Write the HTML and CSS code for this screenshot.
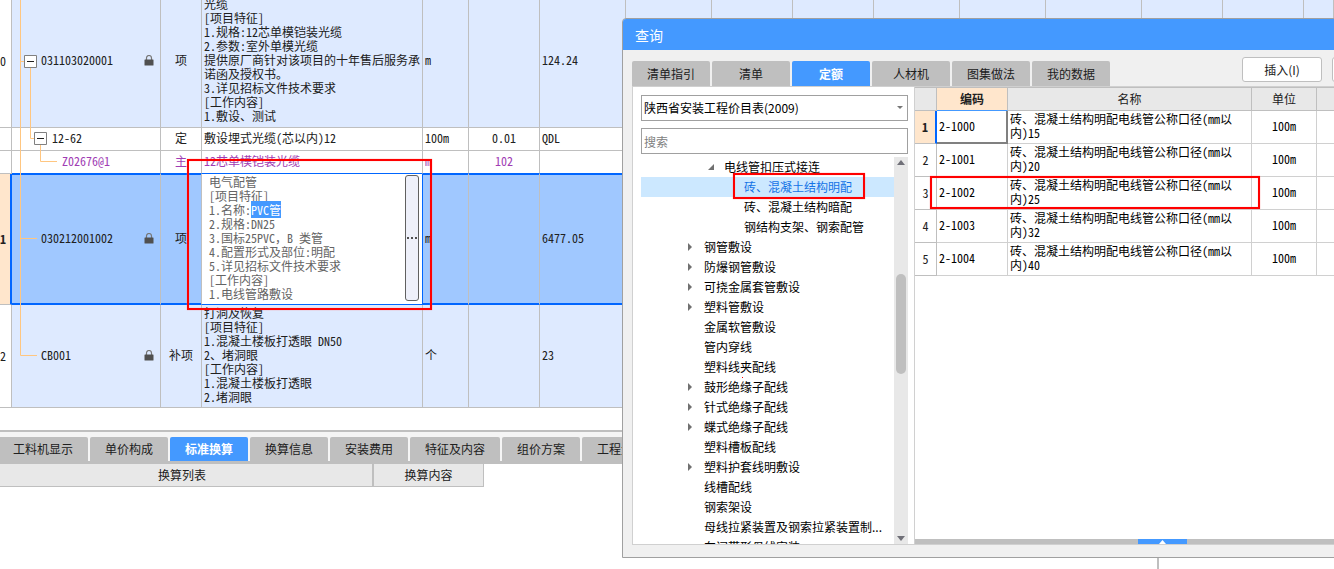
FILE: index.html
```html
<!DOCTYPE html>
<html lang="zh-CN">
<head>
<meta charset="utf-8">
<title>查询</title>
<link rel="stylesheet" href="styles.css">
</head>
<body>
<svg class="defs" width="0" height="0" aria-hidden="true">
  <symbol id="lock" viewBox="0 0 10 11"><path d="M2.5 5V3a2.5 2.5 0 0 1 5 0v2" fill="none" stroke="#777" stroke-width="1.2"/><rect x="0.5" y="4.5" width="9" height="6" rx="0.5" fill="#505050"/></symbol>
</svg>
<main class="workspace">
  <section class="bill">
    <table class="grid">
      <colgroup><col class="w-no"><col class="w-code"><col class="w-kind"><col class="w-desc"><col class="w-unit"><col class="w-qty"><col class="w-l"><col class="w-l"><col class="w-m"><col class="w-m"><col class="w-l"><col class="w-l"><col class="w-xl"><col class="w-m"><col class="w-m"><col></colgroup>
      <tbody>
        <tr class="item r-first"><th>0</th><td><div class="code lv1"><span>031103020001</span><svg class="lock"><use href="#lock"/></svg></div></td><td class="mid">项</td><td>光缆<br>[项目特征]<br>1.规格:12芯单模铠装光缆<br>2.参数:室外单模光缆<br>提供原厂商针对该项目的十年售后服务承诺函及授权书。<br>3.详见招标文件技术要求<br>[工作内容]<br>1.敷设、测试</td><td>m</td><td></td><td>124.24</td><td></td><td></td><td></td><td></td><td></td><td></td><td></td><td></td><td></td></tr>
        <tr class="sub"><th></th><td><div class="code lv2"><span>12-62</span></div></td><td class="mid">定</td><td>敷设埋式光缆(芯以内)12</td><td>100m</td><td class="mid">0.01</td><td>QDL</td><td></td><td></td><td></td><td></td><td></td><td></td><td></td><td></td><td></td></tr>
        <tr class="sub material"><th></th><td><div class="code lv3"><span>Z02676@1</span></div></td><td class="mid">主</td><td>12芯单模铠装光缆</td><td>m</td><td class="mid">102</td><td></td><td></td><td></td><td></td><td></td><td></td><td></td><td></td><td></td><td></td></tr>
        <tr class="current"><th>1</th><td><div class="code lv1"><span>030212001002</span><svg class="lock"><use href="#lock"/></svg></div></td><td class="mid">项</td><td class="editing"><div class="editor"><div class="edit-text" role="textbox" aria-multiline="true" aria-label="项目特征" contenteditable="true">电气配管<br>[项目特征]<br>1.名称:<mark>PVC管</mark><br>2.规格:DN25<br>3.国标25PVC，B 类管<br>4.配置形式及部位:明配<br>5.详见招标文件技术要求<br>[工作内容]<br>1.电线管路敷设</div><button class="more" type="button" aria-label="更多"><i></i><i></i><i></i></button></div></td><td>m</td><td></td><td>6477.05</td><td></td><td></td><td></td><td></td><td></td><td></td><td></td><td></td><td></td></tr>
        <tr class="item r-last"><th>2</th><td><div class="code lv1"><span>CB001</span><svg class="lock"><use href="#lock"/></svg></div></td><td class="mid">补项</td><td>打洞及恢复<br>[项目特征]<br>1.混凝土楼板打透眼 DN50<br>2、堵洞眼<br>[工作内容]<br>1.混凝土楼板打透眼<br>2.堵洞眼</td><td>个</td><td></td><td>23</td><td></td><td></td><td></td><td></td><td></td><td></td><td></td><td></td><td></td></tr>
      </tbody>
    </table>
    <svg class="branches" width="60" height="413" viewBox="0 -5 60 413" aria-hidden="true">
      <path d="M20.5 -5V355.5H37M20.5 61.5H24M30.5 68V138.5H34M40.5 145V161.5H57M20.5 238.5H37" fill="none" stroke="#ffc680"/>
      <path d="M24.5 55.500h12v12h-12zM34.500 132.500h12v12h-12z" fill="#fff" stroke="#808080"/>
      <path d="M27 61.500h7M37 138.500h7" stroke="#202020"/>
    </svg>
  </section>
  <section class="detail">
    <nav class="tabs detail-tabs"><button type="button">工料机显示</button><button type="button">单价构成</button><button type="button" class="on">标准换算</button><button type="button">换算信息</button><button type="button">安装费用</button><button type="button">特征及内容</button><button type="button">组价方案</button><button type="button">工程量明细</button></nav>
    <div class="panes">
      <div class="pane-left"><table class="convert"><thead><tr><th class="c-list">换算列表</th><th class="c-body">换算内容</th></tr></thead></table></div>
      <div class="pane-right"></div>
    </div>
  </section>
</main>

<section class="dialog" role="dialog" aria-label="查询">
  <header class="title">查询</header>
  <div class="bar">
    <nav class="tabs"><button type="button">清单指引</button><button type="button">清单</button><button type="button" class="on">定额</button><button type="button">人材机</button><button type="button">图集做法</button><button type="button">我的数据</button></nav>
    <div class="actions"><button type="button">插入(I)</button><button type="button" aria-label="替换"></button></div>
  </div>
  <div class="content">
    <aside class="side">
      <div class="pick"><select aria-label="定额库"><option>陕西省安装工程价目表(2009)</option></select></div>
      <input class="search" type="text" placeholder="搜索" aria-label="搜索">
      <div class="tree-box">
        <ul class="tree">
          <li class="t2 open">电线管扣压式接连</li>
          <li class="t3 sel">砖、混凝土结构明配</li>
          <li class="t3">砖、混凝土结构暗配</li>
          <li class="t3">钢结构支架、钢索配管</li>
          <li class="shut">钢管敷设</li>
          <li class="shut">防爆钢管敷设</li>
          <li class="shut">可挠金属套管敷设</li>
          <li class="shut">塑料管敷设</li>
          <li>金属软管敷设</li>
          <li>管内穿线</li>
          <li>塑料线夹配线</li>
          <li class="shut">鼓形绝缘子配线</li>
          <li class="shut">针式绝缘子配线</li>
          <li class="shut">蝶式绝缘子配线</li>
          <li>塑料槽板配线</li>
          <li class="shut">塑料护套线明敷设</li>
          <li>线槽配线</li>
          <li>钢索架设</li>
          <li>母线拉紧装置及钢索拉紧装置制...</li>
          <li>车间带形母线安装</li>
        </ul>
        <div class="scroll"><span class="up"></span><span class="thumb"></span><span class="down"></span></div>
      </div>
    </aside>
    <div class="result">
      <table class="quota">
        <colgroup><col class="q-no"><col class="q-code"><col class="q-name"><col class="q-unit"><col></colgroup>
        <thead><tr><th></th><th class="hot">编码</th><th>名称</th><th>单位</th><th></th></tr></thead>
        <tbody>
          <tr><th class="hot">1</th><td class="focus">2-1000</td><td>砖、混凝土结构明配电线管公称口径(mm以内)15</td><td class="mid">100m</td><td></td></tr>
          <tr><th>2</th><td>2-1001</td><td>砖、混凝土结构明配电线管公称口径(mm以内)20</td><td class="mid">100m</td><td></td></tr>
          <tr><th>3</th><td>2-1002</td><td>砖、混凝土结构明配电线管公称口径(mm以内)25</td><td class="mid">100m</td><td></td></tr>
          <tr><th>4</th><td>2-1003</td><td>砖、混凝土结构明配电线管公称口径(mm以内)32</td><td class="mid">100m</td><td></td></tr>
          <tr><th>5</th><td>2-1004</td><td>砖、混凝土结构明配电线管公称口径(mm以内)40</td><td class="mid">100m</td><td></td></tr>
        </tbody>
      </table>
      <div class="splitter"><button type="button" aria-label="展开"><svg width="7" height="4" viewBox="0 0 7 4"><path d="M3.500 0L7 4H0z" fill="#fff"/></svg></button></div>
    </div>
  </div>
</section>
<div class="note note-desc"></div>
<div class="note note-tree"></div>
<div class="note note-row"></div>
<div class="note-dot"></div>
</body>
</html>
```
FILE: styles.css
```css
* { box-sizing: border-box; }
html, body { height: 100%; }
body {
  margin: 0;
  position: relative;
  overflow: hidden;
  background: #fff;
  color: #202020;
  font: 12px/14px "Noto Sans CJK SC", sans-serif;
}
button, input, select { font: inherit; color: inherit; }
button { border: 0; padding: 0; }
table { border-collapse: separate; border-spacing: 0; table-layout: fixed; }
.defs { position: absolute; }

.workspace { height: 100%; display: flex; flex-direction: column; overflow: hidden; }
.bill { position: relative; margin-top: -5px; flex: none; }
.grid, .quota, .convert { font-family: "Noto Sans Mono CJK SC", "Noto Sans CJK SC", monospace; }
.grid { width: 100%; }
.w-no { width: 12px; }
.w-code { width: 149px; }
.w-kind { width: 41px; }
.w-desc { width: 221px; }
.w-unit { width: 46px; }
.w-qty { width: 71px; }
.w-m { width: 81px; }
.w-l { width: 86px; }
.w-xl { width: 96px; }
.grid td, .grid th {
  padding: 0 0 2px 2px;
  border-right: 1px solid #bfbfbf;
  border-bottom: 1px solid #bfbfbf;
  vertical-align: middle;
  overflow: hidden;
}
.grid th { padding: 0; font-weight: normal; text-align: left; }
.grid td.mid, .quota td.mid { text-align: center; padding: 0 0 2px; }
.item td { background: #deeaff; }
.r-first { height: 133px; }
.sub { height: 23px; }
.current { height: 131px; }
.r-last { height: 103px; }
.material { color: #a03cb4; }
.grid .material td { border-bottom-color: #0066ff; }
.grid .current td {
  background: #a0c8ff;
  border-bottom-color: #0066ff;
  box-shadow: inset 0 1px #0066ff, inset 0 -1px #0066ff;
}
.grid .current th { background: #ffe6cc; font-weight: bold; border-right: 2px solid #0066ff; }
.grid .current td.editing { background: #fff; padding: 0 0 2px; box-shadow: none; border-right-color: #0066ff; }
.code { display: flex; align-items: center; justify-content: space-between; padding-right: 6px; }
.lv1 { padding-left: 27px; }
.lv2 { padding-left: 38px; }
.lv3 { padding-left: 48px; }
.lock { width: 10px; height: 11px; flex: none; }
.branches { position: absolute; left: 0; top: 0; }
.editor { display: flex; justify-content: space-between; align-items: stretch; padding: 0 3px 0 7px; color: #646464; }
.edit-text { outline: 0; flex: 1; }
.edit-text mark { background: #4499ff; color: #fff; }
.more {
  width: 14px;
  border: 1px solid #606060;
  border-radius: 3px;
  background: #eef0fa;
  display: flex;
  align-items: center;
  justify-content: center;
  gap: 2px;
}
.more i { width: 2px; height: 2px; background: #505050; }

.detail { flex: 1; margin-top: 22px; border-top: 2px solid #bfbfbf; display: flex; flex-direction: column; }
.tabs { display: flex; gap: 2px; }
.tabs button {
  flex: none;
  min-width: 78px;
  height: 24px;
  padding: 0 15px;
  background: #bfbfbf;
  border-radius: 2px 2px 0 0;
}
.tabs .on { background: #4499ff; color: #fff; font-weight: bold; }
.detail-tabs { padding-top: 5px; background: #f5f5f5; border-bottom: 3px solid #bfbfbf; overflow: hidden; }
.detail-tabs button:first-child { margin-left: -2px; }
.panes { flex: 1; display: flex; }
.pane-left { flex: 1; border-right: 2px solid #bfbfbf; }
.pane-right { width: 175px; }
.convert th { height: 23px; padding: 0; background: #e8e8e8; font-weight: normal; border-bottom: 1px solid #bfbfbf; }
.c-list { width: 374px; border-right: 2px solid #bfbfbf; }
.convert .c-list { padding-right: 8px; }
.c-body { width: 110px; border-right: 1px solid #bfbfbf; }

.dialog {
  position: absolute;
  left: 622px;
  right: -20px;
  top: 18px;
  bottom: 11px;
  display: flex;
  flex-direction: column;
  background: #f0f0f0;
  border: 1px solid #a0a0a0;
  border-radius: 4px 0 0 0;
  overflow: hidden;
}
.title { height: 31px; flex: none; padding-left: 12px; background: #4499ff; color: #fff; font-size: 14px; line-height: 32px; }
.bar { display: flex; justify-content: space-between; padding: 7px 0 0 9px; flex: none; }
.bar .tabs { padding-top: 4px; }
.bar .tabs button { height: 25px; }
.actions { display: flex; gap: 10px; height: 25px; margin-right: -59px; }
.actions button { width: 80px; height: 25px; background: #fff; border: 1px solid #bfbfbf; border-radius: 3px; }
.content {
  flex: 1;
  min-height: 0;
  display: flex;
  margin: 0 0 12px 9px;
  border: 1px solid #d0d0d0;
  background: #fff;
}
.side { width: 282px; flex: none; display: flex; flex-direction: column; padding: 8px 6px 0 8px; border-right: 1px solid #d0d0d0; color: #000; }
.pick { position: relative; }
.pick select, .search {
  appearance: none;
  display: block;
  width: 100%;
  height: 26px;
  padding: 0 2px;
  border: 1px solid #a0a0a0;
  border-radius: 0;
  background: #fff;
}
.pick::after {
  content: "";
  position: absolute;
  right: 5px;
  top: 11px;
  border: 3px solid transparent;
  border-top-color: #777;
  border-bottom: 0;
}
.search { margin-top: 7px; }
.search::placeholder { color: #808080; opacity: 1; }
.tree-box { flex: 1; min-height: 0; margin-top: 3px; display: flex; overflow: hidden; }
.tree { flex: 1; margin: 0; padding: 0; list-style: none; }
.tree li { display: flex; align-items: center; height: 20px; padding-left: 63px; white-space: nowrap; }
.tree .t2 { padding-left: 83px; }
.tree .t3 { padding-left: 103px; }
.tree .sel { background: #cce8ff; color: #1473e6; }
.tree .shut::before {
  content: "";
  margin: 0 12px 0 -16px;
  border: 4px solid transparent;
  border-left-color: #707070;
  border-right: 0;
}
.tree .open::before {
  content: "";
  margin: 0 10px 0 -16px;
  border-left: 6px solid transparent;
  border-bottom: 6px solid #707070;
}
.scroll { width: 14px; background: #e8e8e8; display: flex; flex-direction: column; align-items: center; padding: 3px 0; }
.up { border: 4px solid transparent; border-bottom: 5px solid #707078; border-top: 0; }
.down { border: 4px solid transparent; border-top: 5px solid #707078; border-bottom: 0; margin-top: auto; }
.thumb { width: 10px; height: 100px; margin-top: 109px; border-radius: 5px; background: #bfbfbf; }

.result { flex: 1; min-width: 0; display: flex; flex-direction: column; justify-content: space-between; }
.quota { width: 100%; color: #000; }
.q-no { width: 22px; }
.q-code { width: 71px; }
.q-name { width: 244px; }
.q-unit { width: 65px; }
.quota td, .quota th { padding: 0 18px 2px 2px; height: 33px; border-right: 1px solid #d0d0d0; border-bottom: 1px solid #d0d0d0; }
.quota th { padding: 0; font-weight: normal; color: #202020; border-color: #bfbfbf; }
.quota td:nth-child(2) { padding-right: 0; }
.quota thead th { height: 24px; background: #e8e8e8; border-top: 1px solid #bfbfbf; }
.quota th.hot { background: #ffe6cc; font-weight: bold; }
.quota thead .hot { border-bottom-color: #4499ff; }
.quota tbody .hot { border-right: 2px solid #0066ff; }
.quota td.focus { border-right: 2px solid #808080; border-bottom: 2px solid #808080; }
.splitter { height: 5px; background: #bfbfbf; padding-left: 223px; }
.splitter button { width: 49px; height: 5px; background: #4499ff; display: flex; align-items: center; justify-content: center; }

.note { position: absolute; border: 2px solid #ff0000; pointer-events: none; box-shadow: 0 0 1px #ff8080, inset 0 0 1px #ff8080; }
.note-desc { left: 187px; top: 159px; width: 245px; height: 151px; }
.note-tree { left: 733px; top: 173px; width: 132px; height: 26px; }
.note-row { left: 930px; top: 176px; width: 330px; height: 33px; }
.note-dot { position: absolute; left: 742px; top: 377px; width: 1px; height: 1px; background: #ff0000; }
```
